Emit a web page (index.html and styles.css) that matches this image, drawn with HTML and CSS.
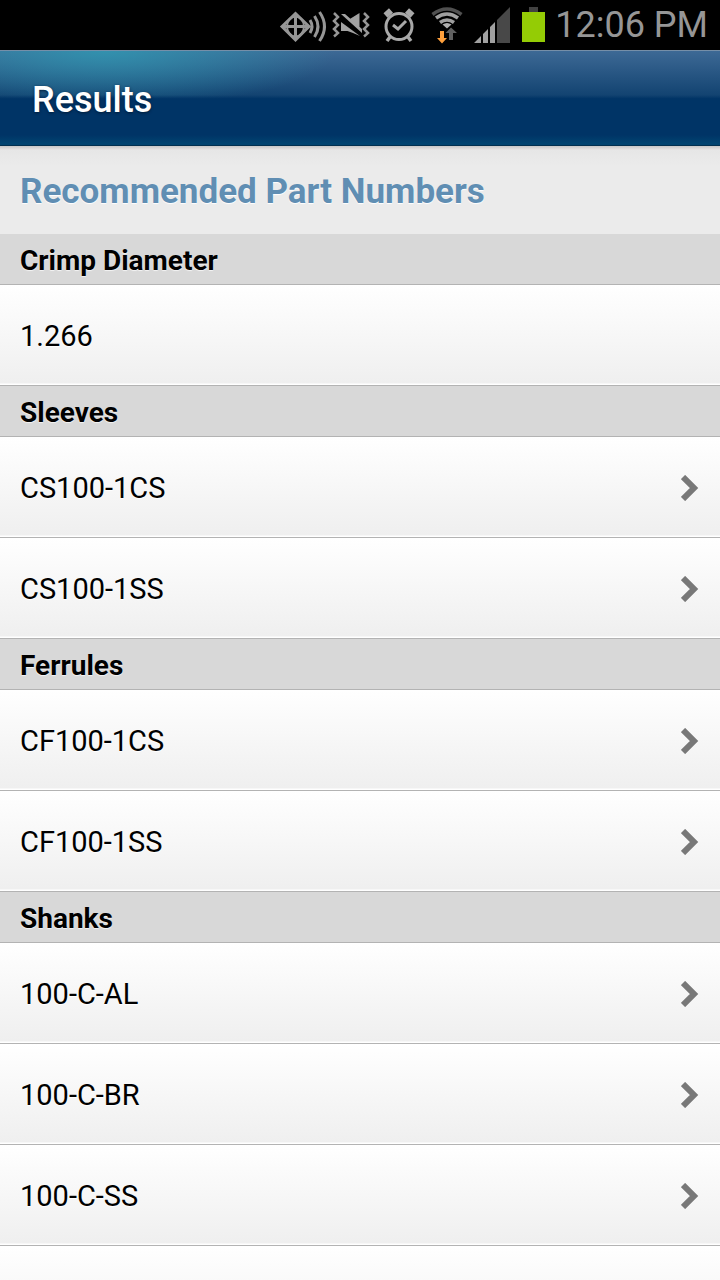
FILE: index.html
```html
<!DOCTYPE html>
<html lang="en">
<head>
<meta charset="utf-8">
<meta name="viewport" content="width=device-width, initial-scale=1">
<title>Results</title>
<link rel="stylesheet" href="styles.css">
</head>
<body>
<div class="screen">
  <div class="status-bar">
    <svg class="status-icons" width="270" height="50" viewBox="280 0 270 50" aria-hidden="true">
      <g fill="none" stroke="#969696" stroke-width="3">
        <path d="M283 26.500L296.500 13.500L310 26.500L296.500 40Z M283 26.500H310M296.500 13.500V40"/>
        <path d="M288 26.500a8.500 10 0 0 1 17 0a8.500 10 0 0 1-17 0" stroke-width="2"/>
        <path d="M311 20q4 6.500 0 13M315.500 16q7 10.500 0 21M320.500 12q10 14.500 0 29"/>
        <path d="M335 13l4 4l-4 4l4 4l-4 4l4 4l-4 3.500M365 13l4 4l-4 4l4 4l-4 4l4 4l-4 3.500" stroke-width="2.500"/>
      </g>
      <path d="M342 22L361 36L354 33L348.500 31H342ZM350 19.500L360.500 13V27ZM342 14h4L363 29v4Z" fill="#a2a2a2"/>
      <g fill="none" stroke="#a8a8a8">
        <circle cx="400" cy="26.500" r="13" stroke-width="3"/>
        <path d="M394 25l5 4l8-8" stroke-width="3"/>
        <path d="M386.500 15.500L392 10.500M413.500 15.500L408 10.500" stroke-width="6"/>
        <path d="M391 37l-3 4M409 37l3 4" stroke-width="3.500"/>
      </g>
      <g fill="none" stroke-width="3.500">
        <path d="M433.500 14.500q14.500-11 29 0" stroke="#505050"/>
        <path d="M437 18q11-8 22 0M441 22.500q7-5 14 0" stroke="#a0a0a0"/>
      </g>
      <path d="M443.500 24.500q4.500-3 9 0L448 28.500Z" fill="#b0b0b0"/>
      <path d="M441 31h4v7h3l-5 5.500l-5-5.500h3Z" fill="#ffa03c"/>
      <path d="M450 40V33h-3.500l5.500-5.500l6 5.500H454v7Z" fill="#606060"/>
      <path d="M475 43L482 36V43ZM484 34l5-5V43H484ZM491 27l5-5V43H491Z" fill="#a0a0a0"/>
      <path d="M498 20L511 7V43H498Z" fill="#484848"/>
      <path d="M530 7h9v5h-9Z" fill="#424242"/>
      <path d="M523 12h23v30h-23Z" fill="#94cc05"/>
    </svg>
    <time class="clock">12:06 PM</time>
  </div>
  <header class="title-bar"><h1 class="title">Results</h1></header>
  <main class="content">
    <h2 class="page-heading">Recommended Part Numbers</h2>
    <h3 class="group">Crimp Diameter</h3>
    <ul class="list">
      <li class="row">1.266</li>
    </ul>
    <h3 class="group">Sleeves</h3>
    <ul class="list">
      <li><a class="row" href="#cs100-1cs">CS100-1CS<svg class="chevron" viewBox="0 0 18 26"><path d="M2 2L13 13L2 24"/></svg></a></li>
      <li><a class="row" href="#cs100-1ss">CS100-1SS<svg class="chevron" viewBox="0 0 18 26"><path d="M2 2L13 13L2 24"/></svg></a></li>
    </ul>
    <h3 class="group">Ferrules</h3>
    <ul class="list">
      <li><a class="row" href="#cf100-1cs">CF100-1CS<svg class="chevron" viewBox="0 0 18 26"><path d="M2 2L13 13L2 24"/></svg></a></li>
      <li><a class="row" href="#cf100-1ss">CF100-1SS<svg class="chevron" viewBox="0 0 18 26"><path d="M2 2L13 13L2 24"/></svg></a></li>
    </ul>
    <h3 class="group">Shanks</h3>
    <ul class="list">
      <li><a class="row" href="#100-c-al">100-C-AL<svg class="chevron" viewBox="0 0 18 26"><path d="M2 2L13 13L2 24"/></svg></a></li>
      <li><a class="row" href="#100-c-br">100-C-BR<svg class="chevron" viewBox="0 0 18 26"><path d="M2 2L13 13L2 24"/></svg></a></li>
      <li><a class="row" href="#100-c-ss">100-C-SS<svg class="chevron" viewBox="0 0 18 26"><path d="M2 2L13 13L2 24"/></svg></a></li>
      <li class="row"></li>
    </ul>
  </main>
</div>
</body>
</html>
```
FILE: styles.css
```css
* {
  box-sizing: border-box;
}

body {
  margin: 0;
  background: #ebebeb;
  color: #000;
  font-family: Roboto, "Liberation Sans", sans-serif;
}

.screen {
  display: flex;
  flex-direction: column;
  height: 100vh;
}

.status-bar {
  display: flex;
  flex: none;
  align-items: center;
  justify-content: flex-end;
  gap: 6px;
  height: 50px;
  padding-right: 12px;
  background: #000;
}

.status-icons {
  flex: none;
}

.clock {
  color: #969696;
  font-size: 36px;
  font-weight: 400;
  line-height: 50px;
  white-space: nowrap;
}

.title-bar {
  display: flex;
  flex: none;
  align-items: center;
  height: 96px;
  padding: 4px 32px 0;
  border-top: 1px solid #768fa8;
  border-bottom: 1px solid #003050;
  background:
    linear-gradient(transparent 44px, #003466 48px, #003466 84px, #004370 92px),
    radial-gradient(ellipse 230px 56px at 105px 0, rgba(48, 155, 180, 0.8), transparent),
    linear-gradient(#3d6995, #10416f 47px, #003466 48px);
}

.title {
  margin: 0;
  color: #fff;
  font-size: 36px;
  font-weight: 500;
  line-height: 44px;
  text-shadow: 0 1px 3px #001c38;
}

.content {
  flex: 1;
  min-height: 0;
  overflow: hidden;
  background: linear-gradient(#c8c8c8, #e6e6e6 4px, #ebebeb 20px);
}

.page-heading {
  margin: 0;
  padding: 24px 20px 20px;
  color: #608eb3;
  font-size: 35px;
  font-weight: 700;
  line-height: 44px;
  text-shadow: 0 1px 1px #fff;
}

.group {
  margin: 0;
  padding: 10px 20px 7px;
  border-bottom: 1px solid #b3b3b3;
  background: #d8d8d8;
  font-size: 28px;
  font-weight: 700;
  line-height: 33px;
  text-shadow: 0 1px 1px #f4f4f4;
}

.list {
  margin: 0;
  padding: 0;
  list-style: none;
}

.row {
  display: flex;
  align-items: center;
  justify-content: space-between;
  height: 101px;
  padding: 2px 21px 0 20px;
  border-bottom: 1px solid #b3b3b3;
  background: linear-gradient(#fff, #efefef 98px, #fff 99px);
  color: #000;
  font-size: 29px;
  line-height: 36px;
  text-decoration: none;
  text-shadow: 0 1px 1px #fff;
}

.chevron {
  flex: none;
  width: 18px;
  height: 26px;
  fill: none;
  stroke: #787878;
  stroke-width: 6px;
}
```
